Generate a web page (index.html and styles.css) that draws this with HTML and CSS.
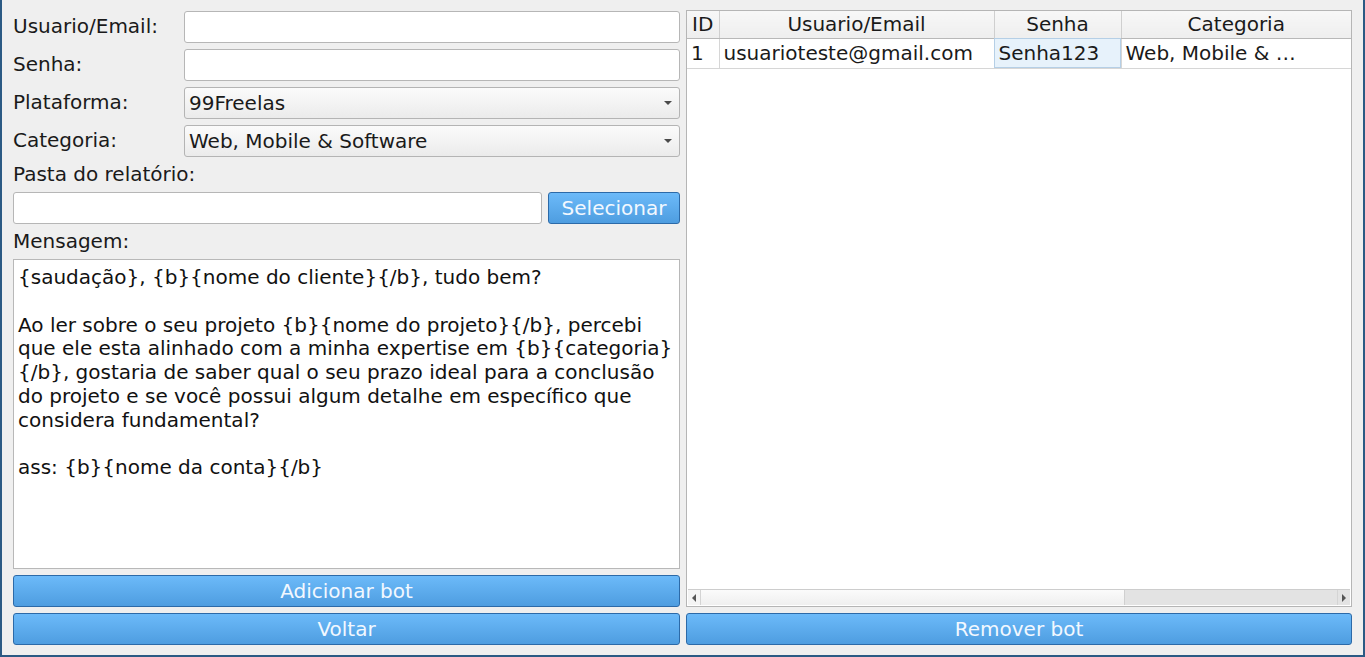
FILE: index.html
```html
<!DOCTYPE html>
<html lang="pt">
<head>
<meta charset="utf-8">
<title>Bots</title>
<link rel="stylesheet" href="styles.css">
</head>
<body>
<div class="window">
  <div class="left">
    <div class="form">
      <label class="lbl">Usuario/Email:</label>
      <div class="input"></div>
      <label class="lbl">Senha:</label>
      <div class="input"></div>
      <label class="lbl">Plataforma:</label>
      <div class="combo"><span>99Freelas</span><span class="arrow"></span></div>
      <label class="lbl">Categoria:</label>
      <div class="combo"><span>Web, Mobile &amp; Software</span><span class="arrow"></span></div>
    </div>
    <div class="lbl line">Pasta do relatório:</div>
    <div class="path-row">
      <div class="input"></div>
      <button class="btn sel">Selecionar</button>
    </div>
    <div class="lbl line">Mensagem:</div>
    <div class="textarea"><div class="msg">{saudação}, {b}{nome do cliente}{/b}, tudo bem?

Ao ler sobre o seu projeto {b}{nome do projeto}{/b}, percebi
que ele esta alinhado com a minha expertise em {b}{categoria}
{/b}, gostaria de saber qual o seu prazo ideal para a conclusão
do projeto e se você possui algum detalhe em específico que
considera fundamental?

ass: {b}{nome da conta}{/b}</div></div>
    <button class="btn">Adicionar bot</button>
    <button class="btn">Voltar</button>
  </div>
  <div class="right">
    <div class="tablebox">
      <table class="grid">
        <colgroup>
          <col class="c-id"><col class="c-user"><col class="c-pass"><col class="c-cat">
        </colgroup>
        <thead>
          <tr><th>ID</th><th>Usuario/Email</th><th>Senha</th><th>Categoria</th></tr>
        </thead>
        <tbody>
          <tr><td>1</td><td>usuarioteste@gmail.com</td><td class="selected">Senha123</td><td>Web, Mobile &amp; …</td></tr>
        </tbody>
      </table>
      <div class="fill"></div>
      <div class="hscroll">
        <div class="sarrow left-a"><span class="tri-l"></span></div>
        <div class="thumb"></div>
        <div class="trough"></div>
        <div class="sarrow right-a"><span class="tri-r"></span></div>
      </div>
    </div>
    <button class="btn">Remover bot</button>
  </div>
</div>
</body>
</html>
```
FILE: styles.css
```css
* { box-sizing: border-box; }
html, body { margin: 0; padding: 0; }
body {
  width: 1365px;
  height: 657px;
  background: #efefef;
  border: 2px solid #2b5a84;
  border-top: 0;
  font-family: "DejaVu Sans", sans-serif;
  font-size: 20px;
  color: #1a1a1a;
  overflow: hidden;
}
.window {
  height: 100%;
  display: grid;
  grid-template-columns: 667px 666px;
  column-gap: 6px;
  padding: 10px 11px 10px 11px;
}
.left, .right {
  display: flex;
  flex-direction: column;
  gap: 6px;
  min-height: 0;
}
.form {
  margin-top: 1px;
  display: grid;
  grid-template-columns: 165px 1fr;
  grid-auto-rows: 32px;
  column-gap: 6px;
  row-gap: 6px;
}
.lbl {
  display: flex;
  align-items: center;
  white-space: nowrap;
  padding-bottom: 2px;
}
.line { height: 23px; }
.input {
  background: #fff;
  border: 1px solid #b6b6b6;
  border-radius: 3px;
  height: 32px;
}
.combo {
  display: flex;
  align-items: center;
  justify-content: space-between;
  padding: 0 7px 1px 4px;
  border: 1px solid #b4b4b4;
  border-radius: 3px;
  background: linear-gradient(#fbfbfb, #ebebeb);
}
.arrow {
  width: 0; height: 0;
  border-left: 4px solid transparent;
  border-right: 4px solid transparent;
  border-top: 4px solid #4a4a4a;
}
.path-row {
  display: flex;
  gap: 6px;
  height: 32px;
}
.path-row .input { flex: 1; }
.btn {
  font-family: "DejaVu Sans", sans-serif;
  font-size: 20px;
  color: #f2f8ff;
  height: 32px;
  border: 1px solid #2c6aa8;
  border-radius: 3px;
  background: linear-gradient(#6cbaf9, #4e9de0);
  padding: 0 0 1px;
  flex: none;
}
.btn.sel { width: 132px; }
.textarea {
  flex: 1;
  min-height: 0;
  background: #fff;
  border: 1px solid #b8b8b8;
  padding: 6px 4px;
}
.msg {
  white-space: pre;
  line-height: 23.8px;
  color: #111;
}
.tablebox {
  flex: 1;
  min-height: 0;
  background: #fff;
  border: 1px solid #b5b5b5;
  display: flex;
  flex-direction: column;
}
.grid {
  border-collapse: collapse;
  table-layout: fixed;
  width: 100%;
}
.c-id { width: 32px; }
.c-user { width: 275px; }
.c-pass { width: 127px; }
.grid th {
  height: 27px;
  font-weight: normal;
  text-align: center;
  background: linear-gradient(#f7f7f7, #eeeeee);
  border-right: 1px solid #cfcfcf;
  border-bottom: 1px solid #b8b8b8;
  padding: 0 0 1px;
  white-space: nowrap;
}
.grid th:last-child { border-right: 0; }
.grid td {
  height: 30px;
  padding: 0 4px 1px;
  border-right: 1px solid #d6d6d6;
  border-bottom: 1px solid #d6d6d6;
  white-space: nowrap;
  overflow: hidden;
}
.grid td:last-child { border-right: 0; }
.grid td.selected {
  background: #e7f2fb;
  outline: 1px solid #b5cfe6;
  outline-offset: -1px;
}
.fill { flex: 1; }
.hscroll {
  height: 16px;
  display: flex;
  border-top: 1px solid #cdcdcd;
  margin: 0 1px 1px;
}
.sarrow {
  width: 13px;
  display: flex;
  align-items: center;
  justify-content: center;
  background: #f4f4f4;
}
.left-a { border-right: 1px solid #d4d4d4; }
.right-a { border-left: 1px solid #d4d4d4; background: #e3e3e3; }
.tri-l {
  width: 0; height: 0;
  border-top: 4px solid transparent;
  border-bottom: 4px solid transparent;
  border-right: 4px solid #555;
}
.tri-r {
  width: 0; height: 0;
  border-top: 4px solid transparent;
  border-bottom: 4px solid transparent;
  border-left: 4px solid #555;
}
.thumb {
  width: 424px;
  background: linear-gradient(#fbfbfb, #efefef);
  border-right: 1px solid #d0d0d0;
}
.trough { flex: 1; background: #e3e3e3; }
```
